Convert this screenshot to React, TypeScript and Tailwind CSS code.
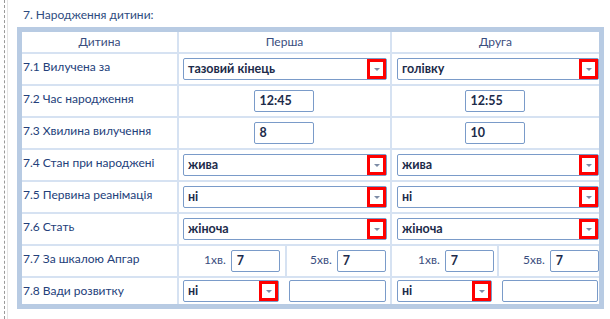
import React from "react";

const LBL = "text-[12px] leading-[16px] text-[#23407a]";

function Arrow() {
  return (
    <div className="absolute right-0 top-0 bottom-0 w-[19px] border-[3px] border-[#ff0000] flex items-center justify-center bg-white">
      <div className="w-0 h-0 border-l-[3px] border-r-[3px] border-t-[3px] border-l-transparent border-r-transparent border-t-[#7d8ca6]" />
    </div>
  );
}

function Select({ value, w, ml }: { value: string; w: string; ml: string }) {
  return (
    <div className={`relative h-[22px] border border-[#7a9bc9] rounded-[2px] bg-white flex items-center pl-[4px] ${w} ${ml}`}>
      <span className="text-[12.5px] font-bold text-[#1c2b4a] leading-none">{value}</span>
      <Arrow />
    </div>
  );
}

function Input({ value, w, cls = "" }: { value: string; w: string; cls?: string }) {
  return (
    <div className={`h-[22px] border border-[#7a9bc9] rounded-[2px] bg-white flex items-center pl-[5px] ${w} ${cls}`}>
      <span className="text-[12.5px] font-bold text-[#1c2b4a] leading-none">{value}</span>
    </div>
  );
}

function Label({ children }: { children: React.ReactNode }) {
  return <div className={`bg-white pl-[1px] pt-[5px] ${LBL}`}>{children}</div>;
}

function Cell({ children, cls = "" }: { children?: React.ReactNode; cls?: string }) {
  return <div className={`bg-white flex items-center ${cls}`}>{children}</div>;
}

export default function App() {
  const selRows: [string, string, string][] = [
    ["7.4 Стан при народжені", "жива", "жива"],
    ["7.5 Первина реанімація", "ні", "ні"],
    ["7.6 Стать", "жіноча", "жіноча"],
  ];
  return (
    <div
      className="w-[610px] h-[319px] bg-white flex overflow-hidden"
      style={{ fontFamily: 'Lato, "Noto Sans", sans-serif' }}
    >
      <div className="w-[4px] shrink-0" />
      <div className="w-[3px] shrink-0 border-l border-dashed border-[#9a9a9a]" />
      <div className="w-[10px] shrink-0 border-l border-[#e4e4e4]" />
      <div className="flex flex-col">
        <div className="h-[27px] pt-[7px] pl-[6px] text-[12px] leading-[16px] text-[#2e4c80]">
          7. Народження дитини:
        </div>
        <div className="border-[5px] border-[#b8cbe3] bg-[#d6e2f2] w-[587px]">
          <div className="grid grid-cols-[155px_211px_207px] grid-rows-[20px_repeat(7,30px)_26px] gap-[2px]">
            <div className="bg-white flex items-center justify-center text-[12px] text-[#3a4d7e]">Дитина</div>
            <div className="bg-white flex items-center justify-center text-[12px] text-[#3a4d7e]">Перша</div>
            <div className="bg-white flex items-center justify-center text-[12px] text-[#3a4d7e]">Друга</div>

            <Label>7.1 Вилучена за</Label>
            <Cell><Select value="тазовий кінець" w="w-[204px]" ml="ml-[4px]" /></Cell>
            <Cell><Select value="голівку" w="w-[202px]" ml="ml-[5px]" /></Cell>

            <Label>7.2 Час народження</Label>
            <Cell cls="justify-center"><Input value="12:45" w="w-[60px]" cls="mr-[2px]" /></Cell>
            <Cell cls="justify-center"><Input value="12:55" w="w-[60px]" cls="mr-[2px]" /></Cell>

            <Label>7.3 Хвилина вилучення</Label>
            <Cell cls="justify-center"><Input value="8" w="w-[60px]" cls="mr-[2px]" /></Cell>
            <Cell cls="justify-center"><Input value="10" w="w-[60px]" cls="mr-[2px]" /></Cell>

            {selRows.map(([l, a, b]) => (
              <React.Fragment key={l}>
                <Label>{l}</Label>
                <Cell><Select value={a} w="w-[204px]" ml="ml-[4px]" /></Cell>
                <Cell><Select value={b} w="w-[202px]" ml="ml-[5px]" /></Cell>
              </React.Fragment>
            ))}

            <Label>7.7 За шкалою Апгар</Label>
            <div className="grid grid-cols-[106px_103px] gap-[2px]">
              <Cell cls="pl-[25px]">
                <span className="text-[12px] text-[#3a4d7e] mb-[3px]">1хв.</span>
                <Input value="7" w="w-[49px]" cls="ml-[5px]" />
              </Cell>
              <Cell cls="pl-[23px]">
                <span className="text-[12px] text-[#3a4d7e] mb-[3px]">5хв.</span>
                <Input value="7" w="w-[49px]" cls="ml-[5px]" />
              </Cell>
            </div>
            <div className="grid grid-cols-[105px_100px] gap-[2px]">
              <Cell cls="pl-[26px]">
                <span className="text-[12px] text-[#3a4d7e] mb-[3px]">1хв.</span>
                <Input value="7" w="w-[49px]" cls="ml-[5px]" />
              </Cell>
              <Cell cls="pl-[24px]">
                <span className="text-[12px] text-[#3a4d7e] mb-[3px]">5хв.</span>
                <Input value="7" w="w-[49px]" cls="ml-[5px]" />
              </Cell>
            </div>

            <Label>7.8 Вади розвитку</Label>
            <Cell>
              <Select value="ні" w="w-[96px]" ml="ml-[4px]" />
              <Input value="" w="w-[97px]" cls="ml-[10px]" />
            </Cell>
            <Cell>
              <Select value="ні" w="w-[95px]" ml="ml-[5px]" />
              <Input value="" w="w-[96px]" cls="ml-[10px]" />
            </Cell>
          </div>
        </div>
      </div>
    </div>
  );
}
